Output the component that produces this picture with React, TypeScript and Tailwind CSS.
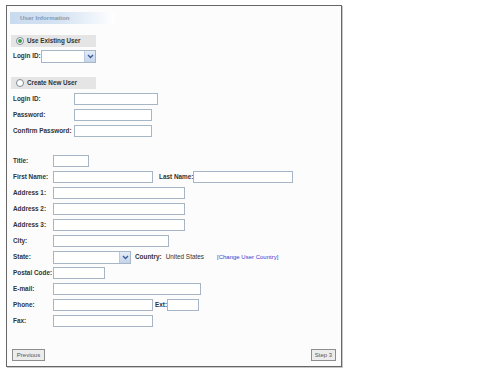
import React from "react"

// compact "User Information" wizard step, drawn at small scale
function Field({ w }: { w: string }) {
  return <input className={`${w} h-[12px] border border-[#a7b6c7] bg-white outline-none`} />
}

function Select({ w }: { w: string }) {
  return (
    <div className={`${w} h-[13px] border border-[#a7b6c7] bg-white flex justify-end`}>
      <div className="w-[11px] h-full bg-gradient-to-b from-[#e4ecf7] to-[#c4d4ea] border-l border-[#b9c9de] flex items-center justify-center">
        <svg width="7" height="5" viewBox="0 0 7 5">
          <path d="M1 1 L3.5 3.5 L6 1" fill="none" stroke="#3b5c9a" strokeWidth="1.4" />
        </svg>
      </div>
    </div>
  )
}

function Radio({ on }: { on?: boolean }) {
  return (
    <span className="w-[8px] h-[8px] rounded-full border border-[#7d8a99] bg-white flex items-center justify-center">
      {on && <span className="w-[4px] h-[4px] rounded-full bg-[#3f9a4a]" />}
    </span>
  )
}

function SectionBar({ label, on }: { label: string; on?: boolean }) {
  return (
    <div className="ml-[4px] w-[85px] h-[12px] bg-[#e5e5e5] flex items-center pl-[5px] gap-[3px]">
      <Radio on={on} />
      <span className="font-bold text-[#333] text-[6.3px] whitespace-nowrap">{label}</span>
    </div>
  )
}

function Row({ label, lw, children }: { label: string; lw: string; children: React.ReactNode }) {
  return (
    <div className="flex items-center h-[12px] pl-[6px] whitespace-nowrap">
      <span className={`${lw} font-bold text-[#333] shrink-0`}>{label}</span>
      {children}
    </div>
  )
}

export default function App() {
  return (
    <div className="w-[495px] h-[371px] bg-white pt-[5px] pl-[6px] font-['Liberation_Sans',Arial,sans-serif] text-[6.4px] leading-none">
      <div className="w-[336px] h-[362px] border border-[#666] shadow-[1px_1px_0_#c8c8c8] bg-[#fcfcfc] flex flex-col">
        {/* Header */}
        <div className="mt-[6px] ml-[3px] w-[105px] h-[12px] bg-gradient-to-r from-[#c8dbef] via-[#d6e4f3] to-white flex items-center pl-[10px]">
          <span className="text-[#8797ad] font-bold text-[6.2px]">User Information</span>
        </div>

        {/* Existing user */}
        <div className="mt-[11px]">
          <SectionBar label="Use Existing User" on />
        </div>
        <div className="mt-[3px] flex items-center h-[13px] pl-[6px] whitespace-nowrap">
          <span className="w-[28px] font-bold text-[#333] shrink-0">Login ID:</span>
          <Select w="w-[55px]" />
        </div>

        {/* New user */}
        <div className="mt-[14px]">
          <SectionBar label="Create New User" />
        </div>
        <div className="mt-[4px] flex flex-col gap-[4px]">
          <Row label="Login ID:" lw="w-[61px]"><Field w="w-[84px]" /></Row>
          <Row label="Password:" lw="w-[61px]"><Field w="w-[78px]" /></Row>
          <Row label="Confirm Password:" lw="w-[61px]"><Field w="w-[78px]" /></Row>
        </div>

        {/* Contact details */}
        <div className="mt-[18px] flex flex-col gap-[4px]">
          <Row label="Title:" lw="w-[40px]"><Field w="w-[36px]" /></Row>
          <Row label="First Name:" lw="w-[40px]">
            <Field w="w-[100px]" />
            <span className="ml-[6px] font-bold text-[#333] shrink-0">Last Name:</span>
            <Field w="w-[100px]" />
          </Row>
          <Row label="Address 1:" lw="w-[40px]"><Field w="w-[132px]" /></Row>
          <Row label="Address 2:" lw="w-[40px]"><Field w="w-[132px]" /></Row>
          <Row label="Address 3:" lw="w-[40px]"><Field w="w-[132px]" /></Row>
          <Row label="City:" lw="w-[40px]"><Field w="w-[116px]" /></Row>
          <Row label="State:" lw="w-[40px]">
            <Select w="w-[78px]" />
            <span className="ml-[4px] font-bold text-[#333]">Country:</span>
            <span className="ml-[4px] text-[#333]">United States</span>
            <span className="ml-[13px] text-[#3a3ad0] text-[6px]">[Change User Country]</span>
          </Row>
          <Row label="Postal Code:" lw="w-[40px]"><Field w="w-[52px]" /></Row>
          <Row label="E-mail:" lw="w-[40px]"><Field w="w-[148px]" /></Row>
          <Row label="Phone:" lw="w-[40px]">
            <Field w="w-[100px]" />
            <span className="ml-[2px] font-bold text-[#333] shrink-0">Ext:</span>
            <Field w="w-[32px]" />
          </Row>
          <Row label="Fax:" lw="w-[40px]"><Field w="w-[100px]" /></Row>
        </div>

        {/* Footer buttons */}
        <div className="mt-auto mb-[5px] px-[5px] flex justify-between">
          <button className="w-[33px] h-[12px] border border-[#8d8d8d] bg-[#ececec] text-[#555] text-[6px]">Previous</button>
          <button className="w-[25px] h-[12px] border border-[#8d8d8d] bg-[#ececec] text-[#555] text-[6px]">Step 3</button>
        </div>
      </div>
    </div>
  )
}
